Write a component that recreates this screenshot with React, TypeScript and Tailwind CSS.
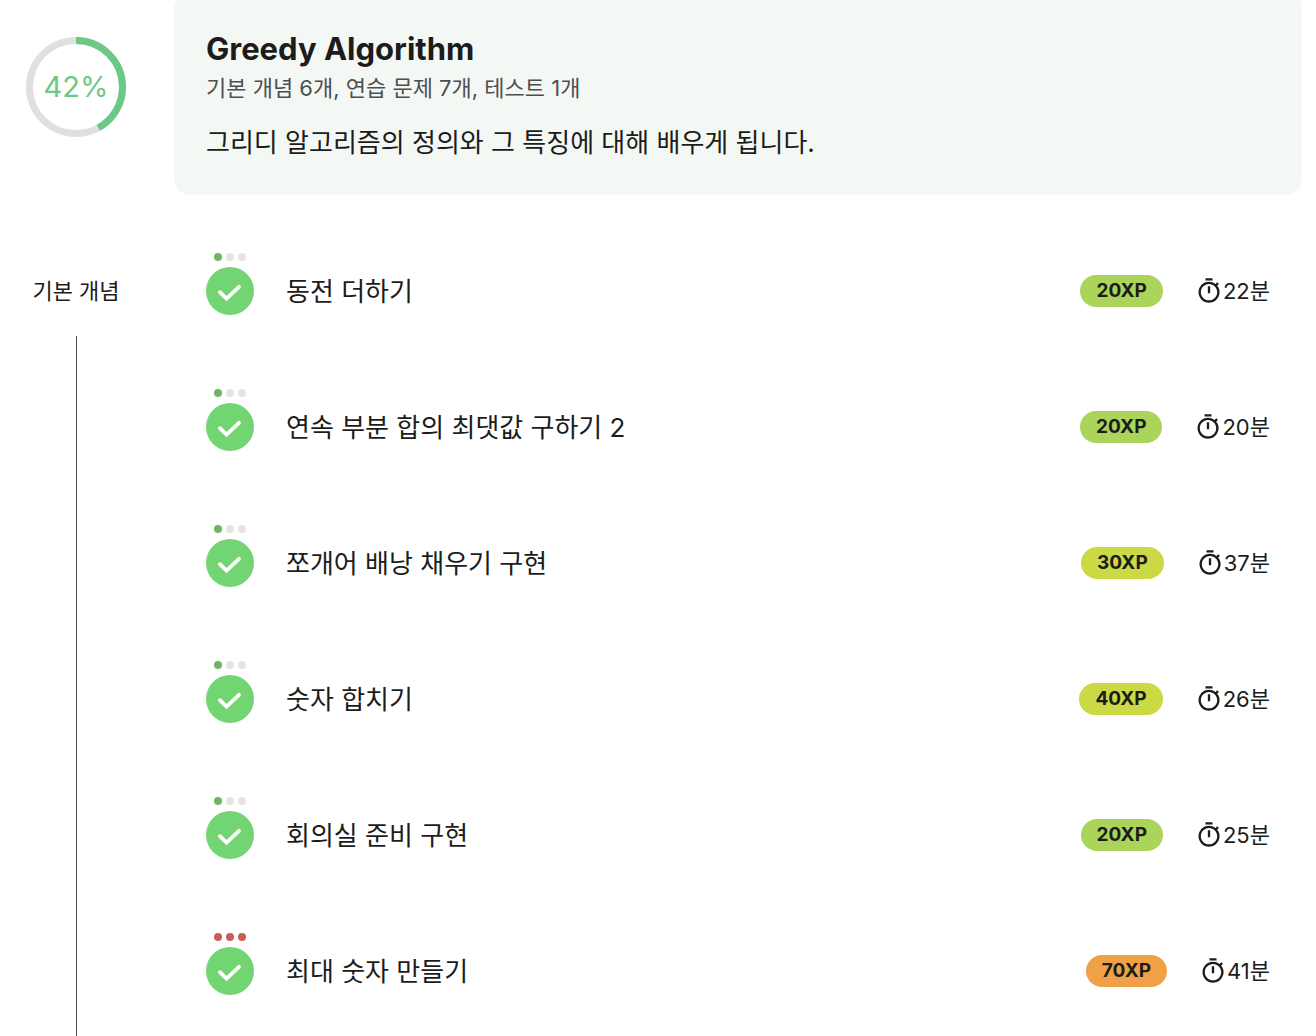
import { MdOutlineTimer } from 'react-icons/md';

type Lesson = {
  id: number;
  title: string;
  xp: number;
  minutes: number;
  level: 1 | 3;
};

const PROGRESS = 42;

const lessons: Lesson[] = [
  { id: 1, title: '동전 더하기', xp: 20, minutes: 22, level: 1 },
  { id: 2, title: '연속 부분 합의 최댓값 구하기 2', xp: 20, minutes: 20, level: 1 },
  { id: 3, title: '쪼개어 배낭 채우기 구현', xp: 30, minutes: 37, level: 1 },
  { id: 4, title: '숫자 합치기', xp: 40, minutes: 26, level: 1 },
  { id: 5, title: '회의실 준비 구현', xp: 20, minutes: 25, level: 1 },
  { id: 6, title: '최대 숫자 만들기', xp: 70, minutes: 41, level: 3 }
];

const badgeColor = (xp: number) => {
  if (xp >= 70) return 'bg-[#f0a146]';
  if (xp >= 30) return 'bg-[#cbd944]';
  return 'bg-[#abd45a]';
};

const ProgressRing = ({ value }: { value: number }) => (
  <div className="relative flex size-25 items-center justify-center">
    <svg viewBox="0 0 100 100" className="absolute inset-0 size-full -rotate-90" aria-hidden="true">
      <circle cx="50" cy="50" r="46.5" fill="none" stroke="#e0e0e0" strokeWidth="7" />
      <circle
        cx="50"
        cy="50"
        r="46.5"
        fill="none"
        stroke="#6cc985"
        strokeWidth="7"
        pathLength={100}
        strokeDasharray={`${value} 100`}
      />
    </svg>
    <span className="relative text-[29px] text-[#6cc985]">{value}%</span>
  </div>
);

const LevelDots = ({ level }: { level: number }) => (
  <div className="flex gap-1">
    {[1, 2, 3].map((n) => (
      <span
        key={n}
        className={`size-2 rounded-full ${
          n > level ? 'bg-[#e4e4e4]' : level === 3 ? 'bg-[#cd5c54]' : 'bg-[#6fb563]'
        }`}
      />
    ))}
  </div>
);

const LessonRow = ({ lesson }: { lesson: Lesson }) => (
  <li className="flex items-end">
    <div className="flex shrink-0 flex-col items-center gap-1.5">
      <LevelDots level={lesson.level} />
      <svg viewBox="0 0 48 48" className="size-12" aria-hidden="true">
        <circle cx="24" cy="24" r="24" fill="#72d572" />
        <path
          d="M13.9 25.2l6.6 6.5L33 19.8"
          fill="none"
          stroke="#fff"
          strokeWidth="3.8"
          strokeLinecap="round"
        />
      </svg>
    </div>

    <div className="ml-8 flex h-12 flex-1 items-center">
      <a href={`#lesson-${lesson.id}`} className="flex-1 text-[26px]">
        {lesson.title}
      </a>
      <span
        className={`flex h-8 items-center rounded-full px-4 text-[19px] font-bold ${badgeColor(lesson.xp)}`}
      >
        {lesson.xp}XP
      </span>
      <span className="ml-8 flex items-center text-[22px]">
        <MdOutlineTimer className="size-7" />
        {lesson.minutes}분
      </span>
    </div>
  </li>
);

const App = () => {
  return (
    <main className="flex min-h-screen flex-col overflow-hidden bg-white font-['Inter','Noto_Sans_CJK_KR',sans-serif] text-[#1b1c1b]">
      {/* Chapter header */}
      <header className="-mt-2 flex">
        <div className="flex w-38 shrink-0 justify-center pt-[45px]">
          <ProgressRing value={PROGRESS} />
        </div>
        <div className="mr-3.5 ml-[22px] flex-1 rounded-2xl bg-[#f4f8f5] px-8 py-8">
          <h1 className="text-[31px] leading-[50px] font-bold">Greedy Algorithm</h1>
          <p className="text-[22px] leading-7 text-[#4d4f4e]">
            기본 개념 6개, 연습 문제 7개, 테스트 1개
          </p>
          <p className="mt-[21px] text-[26px] leading-10">
            그리디 알고리즘의 정의와 그 특징에 대해 배우게 됩니다.
          </p>
        </div>
      </header>

      {/* Lessons */}
      <section className="flex flex-1">
        <div className="flex w-38 shrink-0 flex-col items-center pt-20">
          <h2 className="text-[22px] leading-8">기본 개념</h2>
          <div className="mt-[29px] w-px flex-1 bg-[#555756]" />
        </div>
        <ul className="mr-[46px] ml-[54px] flex flex-1 flex-col gap-[74px] pt-[58px] pb-8">
          {lessons.map((lesson) => (
            <LessonRow key={lesson.id} lesson={lesson} />
          ))}
        </ul>
      </section>
    </main>
  );
};

export default App;
